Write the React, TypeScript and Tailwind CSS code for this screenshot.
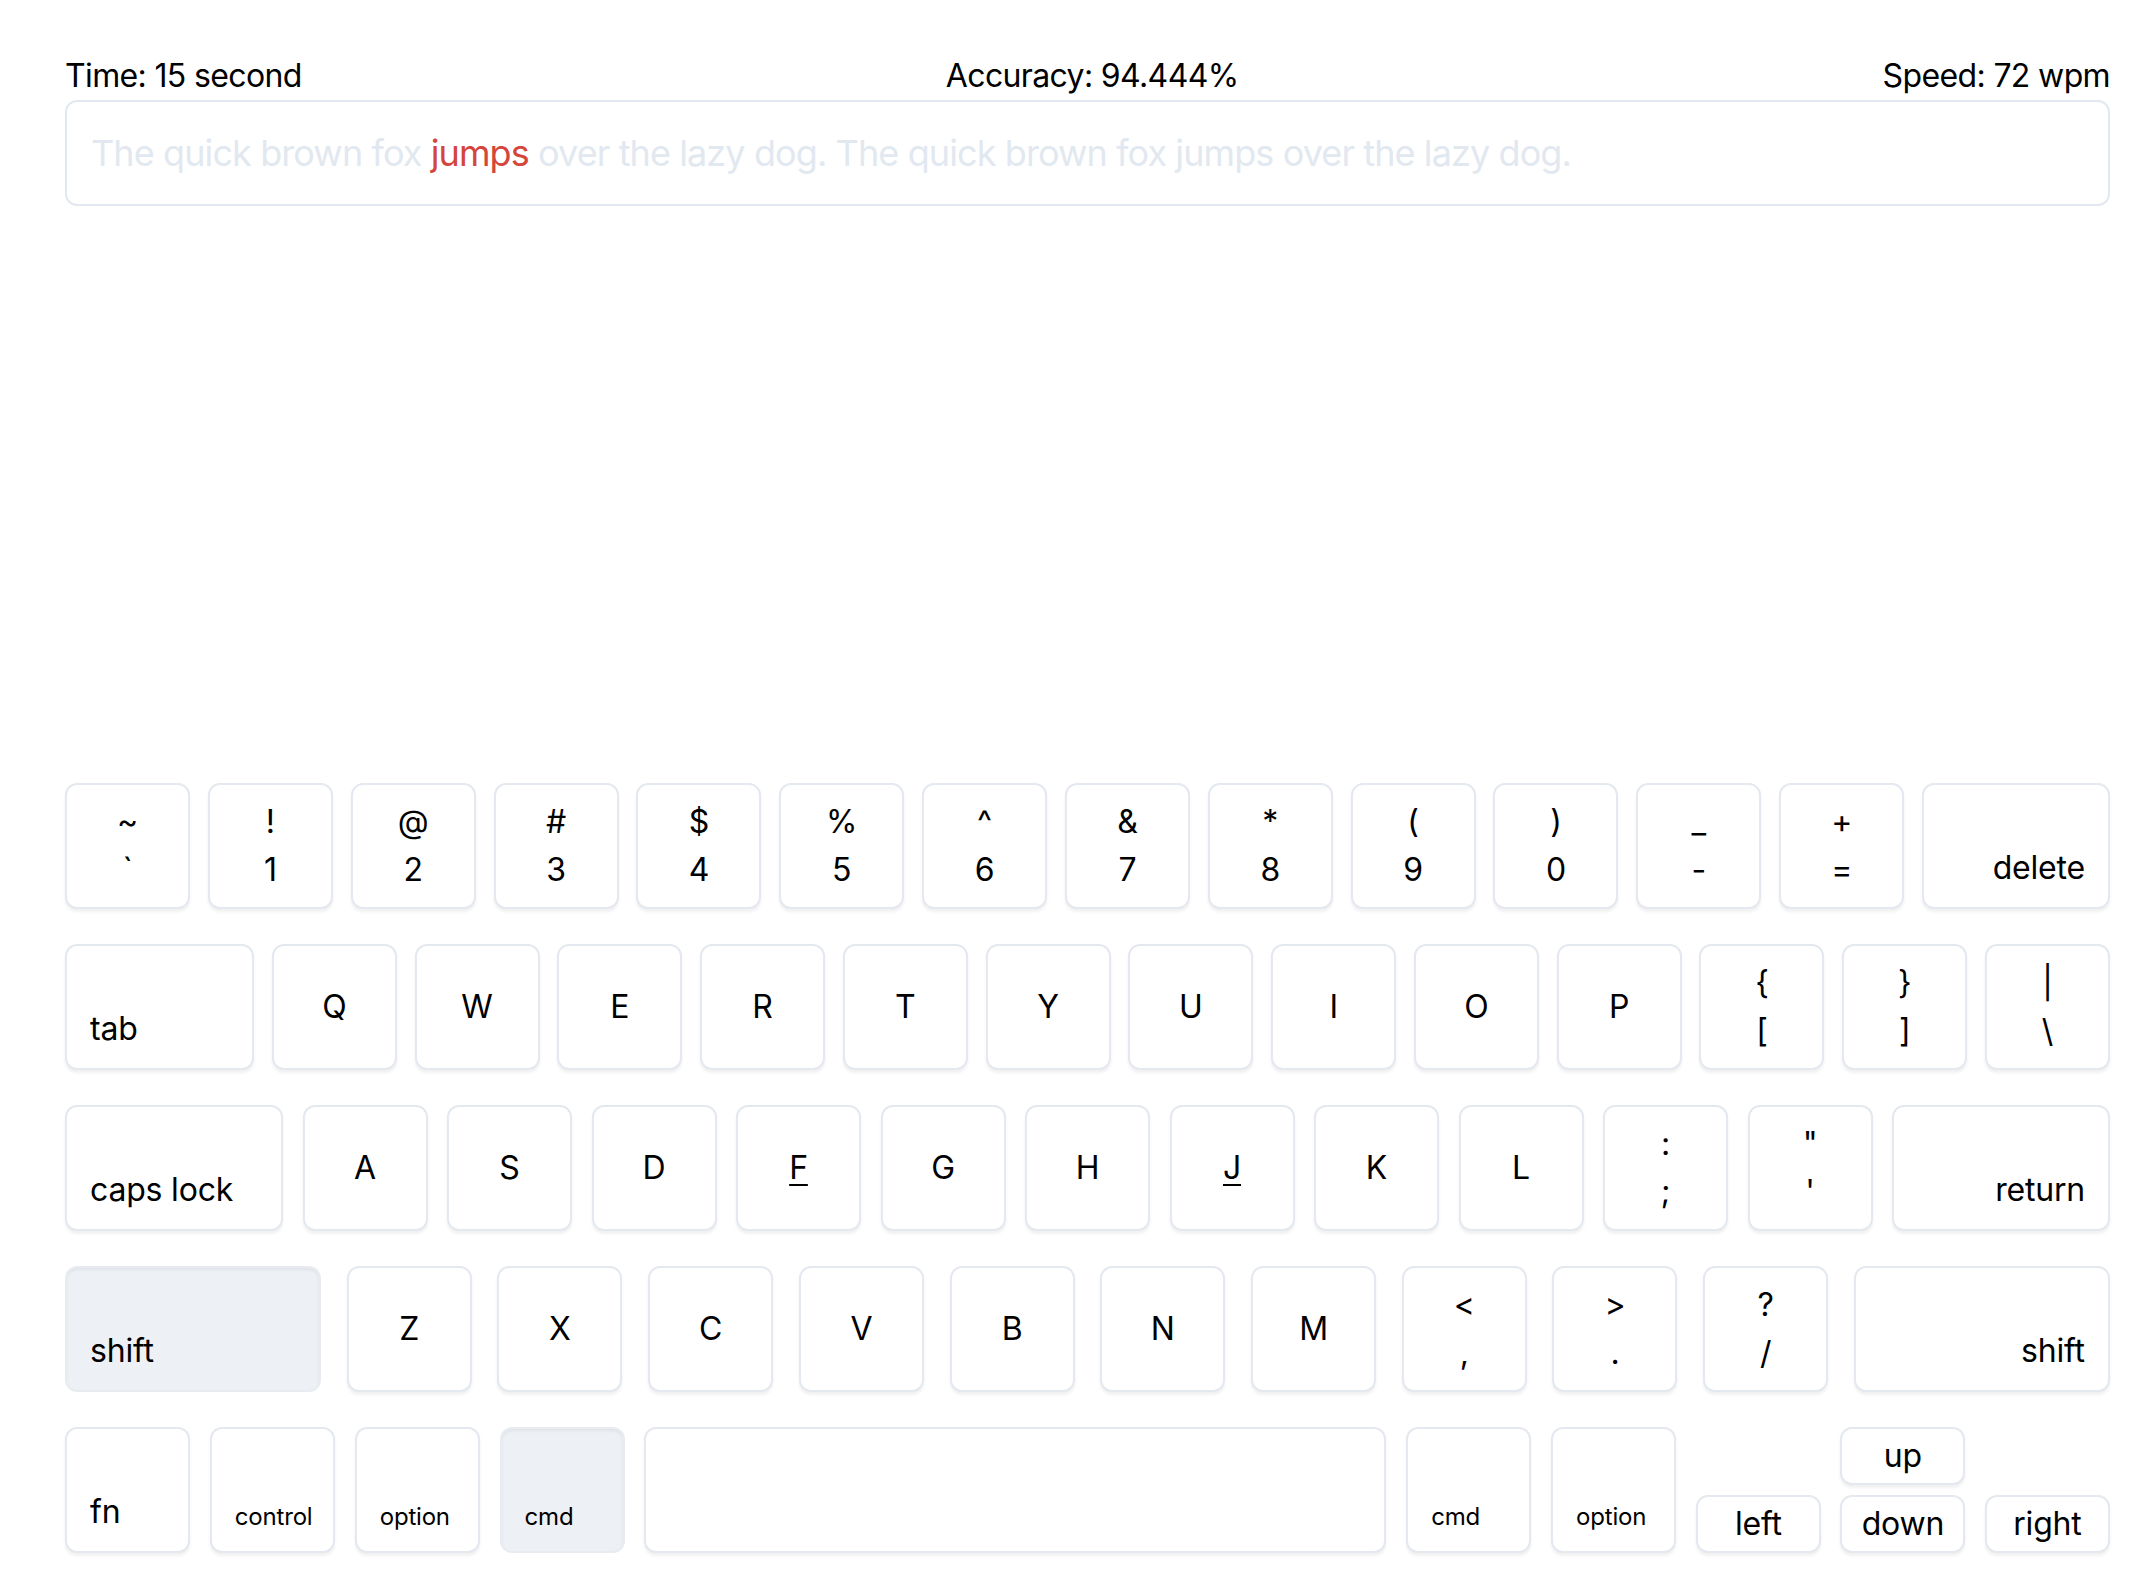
import React from 'react';

type KeyProps = {
  w: string;
  label?: string;
  shift?: string;
  align?: 'center' | 'left' | 'right';
  small?: boolean;
  active?: boolean;
  underline?: boolean;
  h?: string;
};

function Key({ w, label, shift, align = 'center', small, active, underline, h = 'h-full' }: KeyProps) {
  const base = `${w} ${h} shrink-0 rounded-[12px] border-2 flex ${
    active
      ? 'bg-[#edf0f4] border-[#e8ecf1] shadow-[inset_0_2px_3px_rgba(15,23,42,0.06)]'
      : 'bg-white border-[#e4e8ef] shadow-[0_3px_3px_rgba(15,23,42,0.06)]'
  }`;

  if (shift !== undefined) {
    return (
      <div className={`${base} flex-col items-center justify-center text-[32px] leading-[48px]`}>
        <span>{shift}</span>
        <span>{label}</span>
      </div>
    );
  }

  if (align === 'left' || align === 'right') {
    return (
      <div
        className={`${base} items-end pb-[15px] px-[23px] ${align === 'right' ? 'justify-end' : 'justify-start'} ${
          small ? 'text-[24px] leading-[36px] pb-[16px]' : 'text-[32px] leading-[48px]'
        }`}
      >
        {label}
      </div>
    );
  }

  return (
    <div className={`${base} items-center justify-center text-[32px] leading-[48px]`}>
      <span className={underline ? 'underline decoration-2 underline-offset-[5px]' : ''}>{label}</span>
    </div>
  );
}

const row1: [string, string][] = [
  ['`', '~'], ['1', '!'], ['2', '@'], ['3', '#'], ['4', '$'], ['5', '%'], ['6', '^'],
  ['7', '&'], ['8', '*'], ['9', '('], ['0', ')'], ['-', '_'], ['=', '+'],
];
const row2 = ['Q', 'W', 'E', 'R', 'T', 'Y', 'U', 'I', 'O', 'P'];
const row3 = ['A', 'S', 'D', 'F', 'G', 'H', 'J', 'K', 'L'];
const row4 = ['Z', 'X', 'C', 'V', 'B', 'N', 'M'];

export default function App() {
  return (
    <div className="h-screen flex flex-col bg-white text-black pt-[52px] pl-[65px] pr-[40px] pb-[21px] tracking-[-0.012em] font-['Inter',sans-serif]">
      <div className="flex justify-between text-[32px] leading-[48px] tracking-[-0.02em]">
        <span>Time: 15 second</span>
        <span>Accuracy: 94.444%</span>
        <span>Speed: 72 wpm</span>
      </div>

      <div className="border-2 border-[#e2e8f0] rounded-[12px] px-[24px] py-[24px] text-[36px] leading-[54px] tracking-[-0.025em] text-[#e2e8f0] whitespace-nowrap overflow-hidden">
        The quick brown fox <span className="text-[#d4463b]">jumps</span> over the lazy dog. The quick brown fox jumps over
        the lazy dog.
      </div>

      <div className="mt-auto flex flex-col gap-[35px]">
        <div className="flex justify-between h-[126px]">
          {row1.map(([l, s]) => (
            <Key key={l} w="w-[125px]" label={l} shift={s} />
          ))}
          <Key w="w-[188px]" label="delete" align="right" />
        </div>

        <div className="flex justify-between h-[126px]">
          <Key w="w-[189px]" label="tab" align="left" />
          {row2.map((l) => (
            <Key key={l} w="w-[125px]" label={l} />
          ))}
          <Key w="w-[125px]" label="[" shift="{" />
          <Key w="w-[125px]" label="]" shift="}" />
          <Key w="w-[125px]" label="\" shift="|" />
        </div>

        <div className="flex justify-between h-[126px]">
          <Key w="w-[218px]" label="caps lock" align="left" />
          {row3.map((l) => (
            <Key key={l} w="w-[125px]" label={l} underline={l === 'F' || l === 'J'} />
          ))}
          <Key w="w-[125px]" label=";" shift=":" />
          <Key w="w-[125px]" label="'" shift={'"'} />
          <Key w="w-[218px]" label="return" align="right" />
        </div>

        <div className="flex justify-between h-[126px]">
          <Key w="w-[256px]" label="shift" align="left" active />
          {row4.map((l) => (
            <Key key={l} w="w-[125px]" label={l} />
          ))}
          <Key w="w-[125px]" label="," shift="<" />
          <Key w="w-[125px]" label="." shift=">" />
          <Key w="w-[125px]" label="/" shift="?" />
          <Key w="w-[256px]" label="shift" align="right" />
        </div>

        <div className="flex justify-between h-[126px]">
          <Key w="w-[125px]" label="fn" align="left" />
          <Key w="w-[125px]" label="control" align="left" small />
          <Key w="w-[125px]" label="option" align="left" small />
          <Key w="w-[125px]" label="cmd" align="left" small active />
          <Key w="w-[742px]" />
          <Key w="w-[125px]" label="cmd" align="left" small />
          <Key w="w-[125px]" label="option" align="left" small />
          <div className="w-[414px] h-full flex flex-col justify-between">
            <div className="flex justify-center">
              <Key w="w-[125px]" h="h-[58px]" label="up" />
            </div>
            <div className="flex justify-between">
              <Key w="w-[125px]" h="h-[58px]" label="left" />
              <Key w="w-[125px]" h="h-[58px]" label="down" />
              <Key w="w-[125px]" h="h-[58px]" label="right" />
            </div>
          </div>
        </div>
      </div>
    </div>
  );
}
